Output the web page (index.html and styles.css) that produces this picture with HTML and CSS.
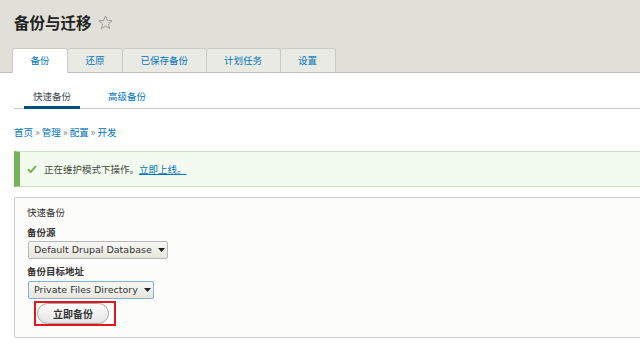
FILE: index.html
```html
<!DOCTYPE html>
<html lang="zh-CN">
<head>
    <meta charset="UTF-8">
    <title>备份与迁移</title>
    <link rel="stylesheet" href="styles.css">
</head>
<body>
    <header class="page-header">
        <h1 class="page-title">
            备份与迁移
            <svg class="star" width="15" height="15" viewBox="0 0 15 15">
                <path d="M7.5 1 L9.4 5.4 L14 5.8 L10.5 8.9 L11.6 13.6 L7.5 11.1 L3.4 13.6 L4.5 8.9 L1 5.8 L5.6 5.4 Z" fill="none" stroke="#9a9a94" stroke-width="1"/>
            </svg>
        </h1>
        <nav class="tabs">
            <a href="#" class="active">备份</a>
            <a href="#">还原</a>
            <a href="#">已保存备份</a>
            <a href="#">计划任务</a>
            <a href="#">设置</a>
        </nav>
    </header>

    <main class="content">
        <nav class="subtabs">
            <a href="#" class="active">快速备份</a>
            <a href="#">高级备份</a>
        </nav>

        <div class="breadcrumb">
            <a href="#">首页</a> » <a href="#">管理</a> » <a href="#">配置</a> » <a href="#">开发</a>
        </div>

        <div class="message">
            <svg class="check" width="10" height="8" viewBox="0 0 10 8">
                <path d="M1 4.2 L3.8 7 L9 1.2" fill="none" stroke="#77b259" stroke-width="2"/>
            </svg>
            <span>正在维护模式下操作。<a href="#">立即上线。</a></span>
        </div>

        <div class="panel">
            <div class="panel-title">快速备份</div>

            <label class="field-label">备份源</label>
            <div class="select">
                <span>Default Drupal Database</span>
                <svg width="7" height="4" viewBox="0 0 7 4"><path d="M0 0 H7 L3.5 4 Z" fill="#222"/></svg>
            </div>

            <label class="field-label">备份目标地址</label>
            <div class="select focused">
                <span>Private Files Directory</span>
                <svg width="7" height="4" viewBox="0 0 7 4"><path d="M0 0 H7 L3.5 4 Z" fill="#222"/></svg>
            </div>

            <div class="highlight">
                <button class="button">立即备份</button>
            </div>
        </div>
    </main>
</body>
</html>
```

FILE: styles.css
```css
body {
    margin: 0;
    background-color: #fff;
    color: #333;
    font-family: "Noto Sans CJK SC", "DejaVu Sans", sans-serif;
    font-size: 9.5px;
    overflow: hidden;
}

a {
    color: #0074bd;
    text-decoration: none;
}

.page-header {
    background-color: #e0e0d8;
    border-bottom: 1px solid #bfbfba;
    padding: 12px 0 0 12px;
}

.page-title {
    display: flex;
    align-items: center;
    gap: 6px;
    margin: 0 0 16px 2px;
    font-size: 15.5px;
    line-height: 20px;
    font-weight: bold;
    color: #222;
}

.tabs {
    display: flex;
    margin-bottom: -1px;
}

.tabs a {
    padding: 0 17.5px;
    line-height: 23px;
    background-color: #eaeae4;
    border: 1px solid #cbcbc4;
    border-left: none;
    border-bottom-color: #bfbfba;
    border-radius: 3px 3px 0 0;
}

.tabs a:first-child {
    border-left: 1px solid #cbcbc4;
}

.tabs a.active {
    background-color: #fff;
    border-bottom-color: #fff;
}

.content {
    padding-left: 14px;
    margin-right: -20px;
}

.subtabs {
    display: flex;
    gap: 19px;
    margin-top: 13px;
    padding-left: 10px;
    border-bottom: 1px solid #c8c8c8;
}

.subtabs a {
    padding: 0 9px;
    line-height: 20px;
    border-bottom: 3px solid transparent;
    margin-bottom: -1px;
}

.subtabs a.active {
    color: #3d4650;
    border-bottom-color: #004f80;
}

.breadcrumb {
    margin-top: 15px;
    line-height: 16px;
    color: #777;
}

.message {
    display: flex;
    align-items: center;
    gap: 7px;
    margin-top: 11px;
    padding: 9px 7px;
    line-height: 16px;
    background-color: #f3faef;
    border: 1px solid #c9e1bd;
    border-left: 6px solid #77b259;
    color: #3f4a3a;
}

.message a {
    text-decoration: underline;
}

.panel {
    display: flex;
    flex-direction: column;
    align-items: flex-start;
    margin-top: 10px;
    padding: 6px 13px 11px;
    background-color: #fcfcfa;
    border: 1px solid #ccc;
    border-radius: 2px;
}

.panel-title {
    line-height: 16px;
    margin-left: -1px;
}

.field-label {
    margin-top: 4px;
    line-height: 16px;
    font-weight: bold;
    margin-left: -1px;
}

.select {
    display: flex;
    align-items: center;
    gap: 6px;
    margin-top: 1px;
    padding: 0 2px 0 5px;
    line-height: 16px;
    font-family: "DejaVu Sans", sans-serif;
    font-size: 9.5px;
    color: #333;
    border: 1px solid #b8b8b8;
    border-radius: 2px;
    background: linear-gradient(#f8f8f5, #e6e6de);
}

.select.focused {
    margin-top: 2px;
    border-color: #86aed6;
}

.highlight {
    margin: 2px 0 0 6px;
    padding: 0 5px 0 1px;
    border: 2px solid #e2171f;
}

.button {
    display: block;
    padding: 0 15px;
    line-height: 19px;
    font-family: "Noto Sans CJK SC", sans-serif;
    font-size: 10px;
    font-weight: bold;
    color: #333;
    border: 1px solid #a6a6a6;
    border-radius: 20px;
    background: linear-gradient(#fefefe, #e3e3e3);
}
```
